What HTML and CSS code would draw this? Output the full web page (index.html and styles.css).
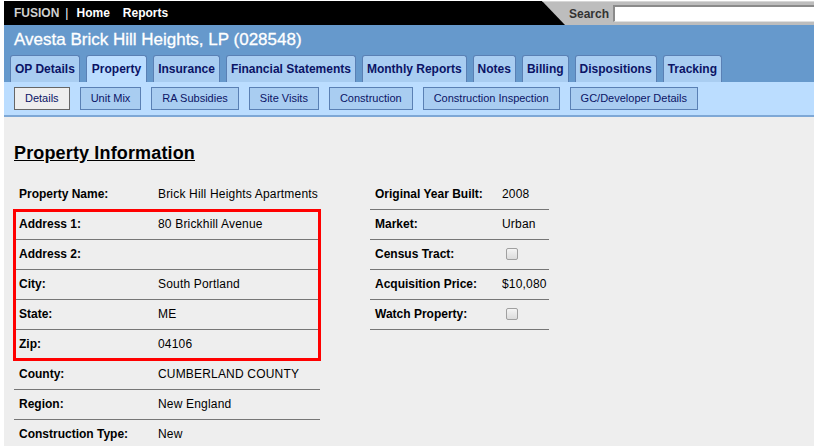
FILE: index.html
```html
<!DOCTYPE html>
<html>
<head>
<meta charset="utf-8">
<title>Property Information</title>
<link rel="stylesheet" href="styles.css">
</head>
<body>
<div class="page">
  <div class="topbar">
    <div class="nav">
      <span class="brand">FUSION</span>
      <span class="sep">|</span>
      <a class="navlink">Home</a>
      <a class="navlink">Reports</a>
    </div>
    <div class="searchzone">
      <span class="searchlabel">Search</span>
      <span class="searchinput"></span>
    </div>
  </div>
  <div class="header">
    <div class="title">Avesta Brick Hill Heights, LP (028548)</div>
    <div class="tabs">
      <span class="tab">OP Details</span>
      <span class="tab active">Property</span>
      <span class="tab">Insurance</span>
      <span class="tab">Financial Statements</span>
      <span class="tab">Monthly Reports</span>
      <span class="tab">Notes</span>
      <span class="tab">Billing</span>
      <span class="tab">Dispositions</span>
      <span class="tab">Tracking</span>
    </div>
  </div>
  <div class="subbar">
    <span class="subbtn current">Details</span>
    <span class="subbtn">Unit Mix</span>
    <span class="subbtn">RA Subsidies</span>
    <span class="subbtn">Site Visits</span>
    <span class="subbtn">Construction</span>
    <span class="subbtn">Construction Inspection</span>
    <span class="subbtn">GC/Developer Details</span>
  </div>
  <div class="content">
    <h1 class="heading">Property Information</h1>
    <div class="columns">
      <div class="ftable left">
        <div class="row"><span class="lbl">Property Name:</span><span class="val">Brick Hill Heights Apartments</span></div>
        <div class="group">
          <div class="row"><span class="lbl">Address 1:</span><span class="val">80 Brickhill Avenue</span></div>
          <div class="row"><span class="lbl">Address 2:</span><span class="val"></span></div>
          <div class="row"><span class="lbl">City:</span><span class="val">South Portland</span></div>
          <div class="row"><span class="lbl">State:</span><span class="val">ME</span></div>
          <div class="row"><span class="lbl">Zip:</span><span class="val">04106</span></div>
        </div>
        <div class="row"><span class="lbl">County:</span><span class="val">CUMBERLAND COUNTY</span></div>
        <div class="row"><span class="lbl">Region:</span><span class="val">New England</span></div>
        <div class="row"><span class="lbl">Construction Type:</span><span class="val">New</span></div>
      </div>
      <div class="ftable right">
        <div class="row"><span class="lbl">Original Year Built:</span><span class="val">2008</span></div>
        <div class="row"><span class="lbl">Market:</span><span class="val">Urban</span></div>
        <div class="row"><span class="lbl">Census Tract:</span><span class="val"><span class="check"></span></span></div>
        <div class="row"><span class="lbl">Acquisition Price:</span><span class="val">$10,080</span></div>
        <div class="row"><span class="lbl">Watch Property:</span><span class="val"><span class="check"></span></span></div>
      </div>
    </div>
  </div>
</div>
</body>
</html>
```

FILE: styles.css
```css
html, body {
  margin: 0;
  padding: 0;
  background: #ffffff;
}
body {
  padding: 1px 0 0 4px;
  font-family: "Liberation Sans", Arial, sans-serif;
  overflow: hidden;
}
.page {
  background: #eeeeee;
  min-height: 445px;
}
.topbar {
  display: flex;
  height: 24px;
  background: #000000;
}
.nav {
  flex: 1;
  display: flex;
  align-items: center;
  padding-left: 10px;
  font-size: 12px;
  font-weight: bold;
}
.brand {
  color: #d0d0d0;
}
.sep {
  color: #ffffff;
  font-weight: normal;
  margin: 0 8px 0 6px;
}
.navlink {
  color: #ffffff;
  margin-right: 13px;
}
.searchzone {
  width: 272px;
  display: flex;
  align-items: center;
  background: #bdbdbd;
  border-top: 1px solid #d6d6d6;
  box-sizing: border-box;
  clip-path: polygon(0 0, 100% 0, 100% 100%, 23px 100%);
  padding-left: 27px;
}
.searchlabel {
  color: #333333;
  font-size: 12px;
  font-weight: bold;
  margin-right: 4px;
}
.searchinput {
  flex: 1;
  height: 14px;
  background: #ffffff;
  border-top: 2px solid #8a8a8a;
  border-left: 2px solid #8a8a8a;
  border-bottom: 1px solid #e0e0e0;
}
.header {
  background: #6699cc;
}
.title {
  color: #ffffff;
  font-size: 17px;
  line-height: 20px;
  padding: 5px 0 5px 10px;
  -webkit-text-stroke: 0.3px #ffffff;
}
.tabs {
  display: flex;
  gap: 6px;
  padding-left: 6px;
}
.tab {
  height: 26px;
  line-height: 26px;
  padding: 0 4px;
  background: #a9cdf1;
  border: 1px solid #5a80b4;
  border-bottom: none;
  border-radius: 3px 3px 0 0;
  color: #0b1466;
  font-size: 12px;
  font-weight: bold;
}
.tab.active {
  background: #bbddff;
  padding: 0 5px;
}
.subbar {
  display: flex;
  gap: 10px;
  padding: 5px 0 5px 10px;
  background: #bbddff;
  border-bottom: 2px solid #7ea8d6;
}
.subbtn {
  height: 21px;
  line-height: 21px;
  padding: 0 10px;
  background: #a9cdf1;
  border: 1px solid #5a80b4;
  color: #0b1466;
  font-size: 11px;
}
.subbtn.current {
  background: #eeeeee;
  border-color: #666666;
  color: #0b1466;
}
.content {
  padding: 25px 10px 0 10px;
}
.heading {
  margin: 0 0 16px 0;
  font-size: 18px;
  line-height: 22px;
  font-weight: bold;
  text-decoration: underline;
  color: #000000;
  letter-spacing: 0.15px;
}
.columns {
  display: flex;
  gap: 50px;
  align-items: flex-start;
}
.ftable.left {
  width: 306px;
}
.ftable.right {
  width: 179px;
}
.row {
  display: flex;
  height: 29px;
  align-items: center;
  border-bottom: 1px solid #767676;
  font-size: 12px;
  color: #000000;
}
.lbl {
  font-weight: bold;
  padding-left: 5px;
  box-sizing: border-box;
  padding-bottom: 1px;
}
.left .lbl {
  width: 139px;
}
.right .lbl {
  width: 127px;
}
.val {
  padding-left: 5px;
  padding-bottom: 1px;
  display: flex;
  align-items: center;
  letter-spacing: 0.18px;
}
.group {
  outline: 3px solid #ff0000;
  outline-offset: -2px;
  position: relative;
  z-index: 1;
}
.check {
  display: inline-block;
  width: 10px;
  height: 10px;
  margin-left: 4px;
  border: 1px solid #a0a0a0;
  border-radius: 2px;
  background: linear-gradient(#f4f4f4, #dcdcdc);
}
```
